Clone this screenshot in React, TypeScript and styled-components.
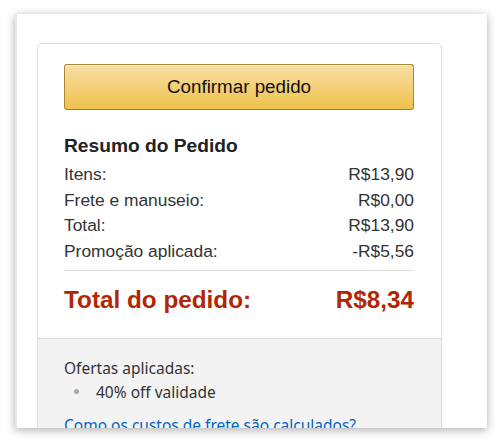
import React from "react";
import styled, { createGlobalStyle } from "styled-components";

const Global = createGlobalStyle`
  html, body { margin: 0; padding: 0; background: #ffffff; }
  body { font-family: "Liberation Sans", Arial, sans-serif; }
`;

const Stage = styled.div`
  width: 500px;
  height: 441px;
  box-sizing: border-box;
  padding: 14px 13px 13px 15px;
  background: #ffffff;
`;

const Frame = styled.div`
  width: 472px;
  height: 414px;
  box-sizing: border-box;
  background: #ffffff;
  box-shadow: 0 2px 9px rgba(0, 0, 0, 0.32);
  border-left: 2px solid #e6e6e6;
  overflow: hidden;
  padding: 29px 45px 0 20px;
`;

const Card = styled.div`
  border: 1px solid #dddddd;
  border-radius: 5px;
  background: #ffffff;
  overflow: hidden;
`;

const Main = styled.div`
  padding: 20px 27px 23px 26px;
`;

const ConfirmButton = styled.button`
  display: flex;
  align-items: center;
  justify-content: center;
  width: 100%;
  height: 46px;
  border: 1px solid #a88734;
  border-bottom-color: #9c7e31;
  border-radius: 3px;
  background: linear-gradient(to bottom, #f7dfa5, #f0c14b);
  box-shadow: inset 0 1px 0 rgba(255, 255, 255, 0.5);
  font-family: "Liberation Sans", Arial, sans-serif;
  font-size: 18.8px;
  color: #111111;
  cursor: pointer;
`;

const Heading = styled.h3`
  margin: 24px 0 4px;
  font-size: 19.2px;
  line-height: 24px;
  font-weight: 700;
  color: #222222;
`;

const Row = styled.div`
  display: flex;
  justify-content: space-between;
  font-size: 17.4px;
  line-height: 25.7px;
  color: #333333;
`;

const Divider = styled.hr`
  margin: 5px 0 0;
  border: 0;
  border-top: 1px solid #dddddd;
`;

const TotalRow = styled.div`
  display: flex;
  justify-content: space-between;
  margin-top: 14px;
  font-size: 24.3px;
  line-height: 30px;
  font-weight: 700;
  color: #b12704;
`;

const Offers = styled.div`
  border-top: 1px solid #dddddd;
  background: #f3f3f3;
  padding: 17px 26px 20px;
  font-family: "Noto Sans", "Open Sans", sans-serif;
  font-size: 15.5px;
  line-height: 24px;
  color: #333333;
`;

const OfferTitle = styled.div``;

const OfferList = styled.ul`
  list-style: none;
  margin: 0;
  padding: 0;
`;

const OfferItem = styled.li`
  display: flex;
  align-items: center;
  padding-left: 10px;
`;

const Bullet = styled.span`
  display: inline-block;
  width: 5px;
  height: 5px;
  border-radius: 50%;
  background: #aaaaaa;
  margin-right: 17px;
`;

const Link = styled.a`
  display: block;
  margin-top: 9px;
  color: #0066c0;
  text-decoration: none;
`;

const rows: [string, string][] = [
  ["Itens:", "R$13,90"],
  ["Frete e manuseio:", "R$0,00"],
  ["Total:", "R$13,90"],
  ["Promoção aplicada:", "-R$5,56"],
];

export default function App() {
  return (
    <>
      <Global />
      <Stage>
        <Frame>
          <Card>
            <Main>
              <ConfirmButton>Confirmar pedido</ConfirmButton>
              <Heading>Resumo do Pedido</Heading>
              {rows.map(([label, value]) => (
                <Row key={label}>
                  <span>{label}</span>
                  <span>{value}</span>
                </Row>
              ))}
              <Divider />
              <TotalRow>
                <span>Total do pedido:</span>
                <span>R$8,34</span>
              </TotalRow>
            </Main>
            <Offers>
              <OfferTitle>Ofertas aplicadas:</OfferTitle>
              <OfferList>
                <OfferItem>
                  <Bullet />
                  40% off validade
                </OfferItem>
              </OfferList>
              <Link href="#">Como os custos de frete são calculados?</Link>
            </Offers>
          </Card>
        </Frame>
      </Stage>
    </>
  );
}
